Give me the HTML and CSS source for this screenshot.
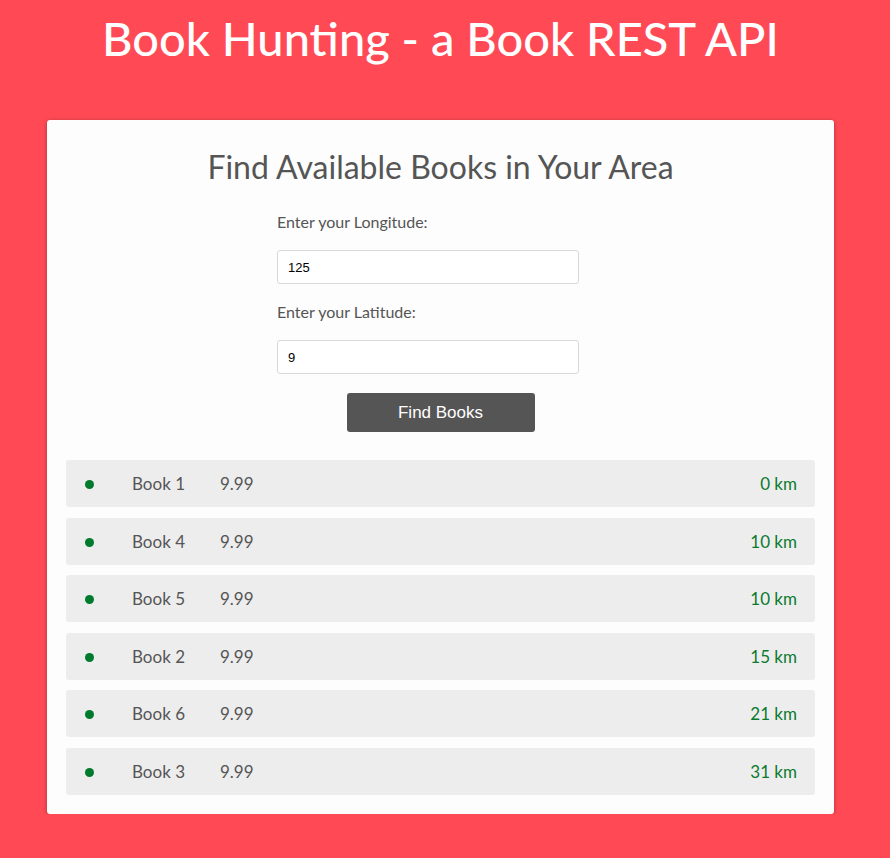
FILE: index.html
```html
<!DOCTYPE html>
<html>
<head>
<meta charset="utf-8">
<title>Book Hunting</title>
<link rel="stylesheet" href="styles.css">
</head>
<body>
<div class="page">
  <h1 class="title">Book Hunting - a Book REST API</h1>
  <div class="card">
    <h2 class="card-title">Find Available Books in Your Area</h2>
    <form class="form">
      <label class="label">Enter your Longitude:</label>
      <input class="input" type="text" value="125">
      <label class="label">Enter your Latitude:</label>
      <input class="input" type="text" value="9">
    </form>
    <div class="actions"><button class="btn" type="button">Find Books</button></div>
    <ul class="list">
      <li class="item"><span class="dot"></span><span class="name">Book 1</span><span class="price">9.99</span><span class="dist">0 km</span></li>
      <li class="item"><span class="dot"></span><span class="name">Book 4</span><span class="price">9.99</span><span class="dist">10 km</span></li>
      <li class="item"><span class="dot"></span><span class="name">Book 5</span><span class="price">9.99</span><span class="dist">10 km</span></li>
      <li class="item"><span class="dot"></span><span class="name">Book 2</span><span class="price">9.99</span><span class="dist">15 km</span></li>
      <li class="item"><span class="dot"></span><span class="name">Book 6</span><span class="price">9.99</span><span class="dist">21 km</span></li>
      <li class="item"><span class="dot"></span><span class="name">Book 3</span><span class="price">9.99</span><span class="dist">31 km</span></li>
    </ul>
  </div>
</div>
</body>
</html>
```
FILE: styles.css
```css
html, body {
  margin: 0;
  padding: 0;
  background: #ff4a56;
  font-family: Lato, "Open Sans", sans-serif;
}
.page {
  width: 881px;
  padding-top: 10px;
}
.title {
  margin: 0;
  height: 110px;
  text-align: center;
  color: #fff;
  font-size: 47px;
  font-weight: 500;
  line-height: 56px;
}
.card {
  margin-left: 47px;
  width: 749px;
  padding: 18px 19px 19px 19px;
  background: #fdfdfd;
  border-radius: 3px;
  box-shadow: 0 1px 4px rgba(0,0,0,0.35);
}
.card-title {
  margin: 9px 0 0;
  text-align: center;
  color: #555;
  font-size: 32px;
  font-weight: 400;
  line-height: 40px;
}
.form {
  width: 327px;
  margin: 25px auto 0;
  display: flex;
  flex-direction: column;
  align-items: flex-start;
}
.label {
  color: #555;
  font-size: 16px;
  line-height: 20px;
  margin-bottom: 18px;
}
.input {
  box-sizing: border-box;
  width: 302px;
  height: 34px;
  border: 1px solid #d9d9d9;
  border-radius: 3px;
  background: #fff;
  padding: 0 10px;
  font-family: "Liberation Sans", Arial, sans-serif;
  font-size: 13px;
  color: #000;
  margin-bottom: 18px;
}
.actions {
  display: flex;
  justify-content: center;
  margin-top: 1px;
}
.btn {
  width: 188px;
  height: 39px;
  border: none;
  border-radius: 3px;
  background: #555;
  color: #fff;
  font-family: "Liberation Sans", Arial, sans-serif;
  font-size: 17px;
}
.list {
  list-style: none;
  margin: 28px 0 0;
  padding: 0;
  display: flex;
  flex-direction: column;
  gap: 10.5px;
}
.item {
  display: flex;
  align-items: center;
  height: 47px;
  background: #ededed;
  border-radius: 3px;
  padding: 0 18px 0 18px;
  font-size: 17px;
  color: #555;
}
.dot {
  width: 9px;
  height: 9px;
  border-radius: 50%;
  background: #007a2c;
  margin: 2px 0 0 1px;
}
.name {
  margin-left: 38px;
}
.price {
  margin-left: 35px;
}
.dist {
  margin-left: auto;
  color: #0a7a2e;
}
```
